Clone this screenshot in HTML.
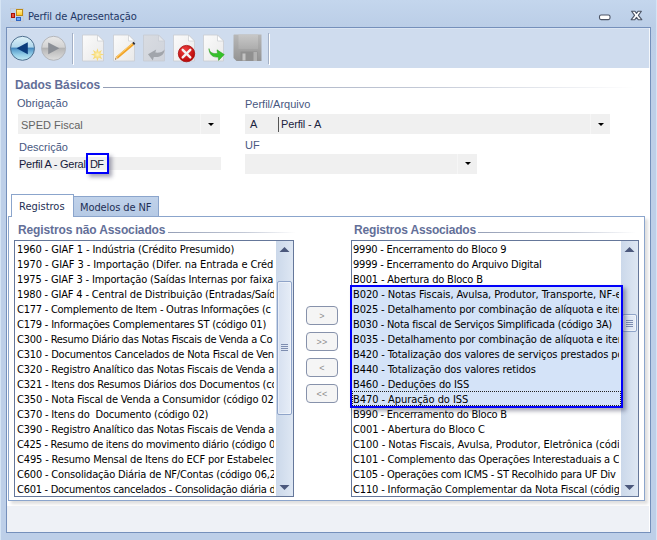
<!DOCTYPE html>
<html lang="pt-BR">
<head>
<meta charset="utf-8">
<title>Perfil de Apresentação</title>
<style>
html,body{margin:0;padding:0;}
body{width:657px;height:540px;overflow:hidden;position:relative;background:#c1d3eb;
  font-family:"DejaVu Sans Condensed","DejaVu Sans","Liberation Sans",sans-serif;font-size:11px;color:#000;}
.abs{position:absolute;}
#frame{left:0;top:0;width:657px;height:540px;background:linear-gradient(#c4d6ed 0px,#bbcee7 27px,#bdcfe8 60px,#bdcfe8 100%);}
#edgeL{left:0;top:0;width:1px;height:540px;background:#d5e4f4;}
#edgeR{left:656px;top:0;width:1px;height:540px;background:#d5e4f4;}
#title{left:28px;top:10px;height:14px;line-height:14px;color:#1e3766;white-space:nowrap;letter-spacing:-0.12px;}
#client{left:6px;top:27px;width:643px;height:504px;border:1px solid #7590bb;background:#fff;}
#toolbar{left:0;top:0;width:642px;height:40px;background:#cfdcee;border-right:1px solid #f4f7fb;box-shadow:inset 0 1px 0 #dbe5f3;}
.sep{width:1px;height:31px;top:5px;background:#a3b0c6;box-shadow:1px 1px 0 #fff;}
#status{left:0;top:478px;width:642px;height:26px;background:#eef1f6;}
.gtitle{font:bold 12px "Liberation Sans",sans-serif;color:#636f98;white-space:nowrap;line-height:14px;height:14px;}
.gline{height:1px;background:linear-gradient(90deg,#959fb6,#c3c9d6 60%,#fff);}
.lbl{font:11px "Liberation Sans",sans-serif;color:#48587f;white-space:nowrap;line-height:13px;height:13px;}
.field{background:#f0f0f0;height:20px;}
.ftxt{font:11px "Liberation Sans",sans-serif;white-space:nowrap;line-height:13px;height:13px;}
.dd{width:0;height:0;border-left:3.25px solid transparent;border-right:3.25px solid transparent;border-top:3.75px solid #000;}
.tab{box-sizing:border-box;border:1px solid #8ba5cc;border-bottom:none;white-space:nowrap;color:#1e2f55;}
#tabpage{left:1px;top:188px;width:635px;height:283px;border:1px solid #8ba5cc;background:#fff;box-shadow:3px 3px 3px rgba(0,0,0,.13);}
.list{box-sizing:border-box;border:1px solid #65779a;background:#fff;overflow:hidden;}
.list .it{position:relative;box-sizing:border-box;width:259px;height:15px;line-height:18px;white-space:nowrap;padding-left:2px;letter-spacing:-0.1px;overflow:hidden;}
.sb{width:17px;top:0;right:0;bottom:0;background:linear-gradient(90deg,#cbd8ea,#dee7f3);}
.thumb{box-sizing:border-box;border:1px solid #8fa4c9;border-radius:2px;background:linear-gradient(90deg,#d6e0f0,#e6edf7);box-shadow:inset 0 0 0 1px rgba(255,255,255,.45);}
.btn{box-sizing:border-box;width:32px;height:19px;border:1px solid #8792ab;border-radius:4px;background:#f5f5f5;color:#8e8e8e;text-align:center;line-height:19px;font:9px/19px "Liberation Sans",sans-serif;letter-spacing:0.3px;}
</style>
</head>
<body>
<div id="frame" class="abs"></div>
<div id="edgeL" class="abs"></div>
<div id="edgeR" class="abs"></div>

<!-- title icon -->
<svg class="abs" style="left:10px;top:8px" width="14" height="14" viewBox="0 0 14 14">
  <defs><linearGradient id="yl" x1="0" y1="0" x2="0" y2="1"><stop offset="0" stop-color="#fff2a8"/><stop offset="1" stop-color="#ffc61e"/></linearGradient></defs><rect x="0.5" y="0.5" width="13" height="13" fill="none" stroke="#c4c6cc" stroke-width="0.8" opacity=".8"/>
  <rect x="6.5" y="1.5" width="6" height="6" fill="url(#yl)" stroke="#bd8a14"/>
  <rect x="1.5" y="5.5" width="3" height="4" fill="#e8503c" stroke="#a81408"/>
  <rect x="6.5" y="9.5" width="4" height="3" fill="#6aa8f8" stroke="#2c64c4"/>
</svg>
<div id="title" class="abs">Perfil de Apresentação</div>

<!-- caption buttons -->
<svg class="abs" style="left:597px;top:8px" width="50" height="16" viewBox="0 0 50 16">
  <rect x="2.5" y="7" width="10.5" height="4.6" rx="1.6" fill="#fff" stroke="#4d5566" stroke-width="1.1"/>
  <path d="M34.6 3.3 L38 3.3 L39.5 5.4 L41 3.3 L44.4 3.3 L41.4 7.4 L44.8 11.7 L41.2 11.7 L39.5 9.4 L37.8 11.7 L34.2 11.7 L37.6 7.4 Z" fill="#fff" stroke="#4d5566" stroke-width="1.1" stroke-linejoin="round"/>
</svg>

<div id="client" class="abs">
  <div id="toolbar" class="abs"></div>
  <div id="status" class="abs"></div>

  <!-- toolbar icons : coordinates are relative to client inner origin (7,28) -->
  <svg class="abs" style="left:0;top:0" width="300" height="40" viewBox="7 28 300 40">
    <defs>
      <linearGradient id="gb" x1="0" y1="0" x2="0" y2="1">
        <stop offset="0" stop-color="#def1f8"/><stop offset=".44" stop-color="#b2d8ec"/>
        <stop offset=".5" stop-color="#4688bd"/><stop offset=".58" stop-color="#62a4d0"/><stop offset=".78" stop-color="#96cfe8"/><stop offset="1" stop-color="#c4eaf5"/>
      </linearGradient>
      <linearGradient id="gg" x1="0" y1="0" x2="0" y2="1">
        <stop offset="0" stop-color="#e9e9e9"/><stop offset=".45" stop-color="#d3d3d3"/>
        <stop offset=".5" stop-color="#b3b3b3"/><stop offset=".6" stop-color="#bebebe"/><stop offset="1" stop-color="#dfdfdf"/>
      </linearGradient>
      <linearGradient id="pg" x1="0" y1="0" x2="1" y2="1">
        <stop offset="0" stop-color="#fbfbfb"/><stop offset="1" stop-color="#e9e9e9"/>
      </linearGradient>
      <linearGradient id="pgd" x1="0" y1="0" x2="1" y2="1">
        <stop offset="0" stop-color="#d9dce2"/><stop offset="1" stop-color="#cfd3da"/>
      </linearGradient>
      <radialGradient id="rd" cx=".4" cy=".3" r=".8">
        <stop offset="0" stop-color="#f04040"/><stop offset="1" stop-color="#b00000"/>
      </radialGradient>
      <linearGradient id="fl" x1="0" y1="0" x2="0" y2="1">
        <stop offset="0" stop-color="#b8b8b8"/><stop offset="1" stop-color="#939393"/>
      </linearGradient>
      <linearGradient id="fl2" x1="0" y1="0" x2="0" y2="1"><stop offset="0" stop-color="#c8c8c8"/><stop offset="1" stop-color="#adadad"/></linearGradient>
      <radialGradient id="st" cx=".5" cy=".5" r=".5">
        <stop offset="0" stop-color="#fdf4c8"/><stop offset=".5" stop-color="#f8dc78"/><stop offset="1" stop-color="#f5d466"/>
      </radialGradient>
    </defs>
    <!-- back -->
    <circle cx="22.5" cy="48.3" r="12" fill="url(#gb)" stroke="#4f6f8f" stroke-width="1"/>
    <path d="M16.6 48.3 L27.8 42.2 L27.8 54.2 Z" fill="#0b3c7c"/>
    <!-- forward -->
    <circle cx="53.6" cy="48.3" r="12" fill="url(#gg)" stroke="#b4b7bc" stroke-width="1"/>
    <path d="M59.4 48.3 L48.2 42.4 L48.2 54.2 Z" fill="#8b8f96"/>
    <!-- new -->
    <g>
      <path d="M82.5 35 H97.5 L103.5 41 V61 H82.5 Z" fill="url(#pg)" stroke="#c9cbd0" stroke-width=".8"/>
      <path d="M97.5 35 V41 H103.5 Z" fill="#fff" stroke="#c9cbd0" stroke-width=".7"/>
      <path d="M97.4 48.3 L98.6 52 L101.9 50 L100.2 53.4 L104.2 54.4 L100.3 55.6 L102.2 59.2 L98.7 57.4 L97.4 61 L96.2 57.4 L92.8 59.3 L94.5 55.8 L90.8 54.6 L94.6 53.5 L92.9 50 L96.3 52 Z" fill="url(#st)"/>
    </g>
    <!-- edit -->
    <g>
      <path d="M113.5 35 H128.5 L134.5 41 V61 H113.5 Z" fill="url(#pg)" stroke="#c9cbd0" stroke-width=".8"/>
      <path d="M128.5 35 V41 H134.5 Z" fill="#fff" stroke="#c9cbd0" stroke-width=".7"/>
      <path d="M115 59.6 L116.2 56.6 L132.2 43 L134 45 L118 58.6 Z" fill="#f2a325"/>
      <path d="M116.8 56.9 L132.5 43.6" stroke="#fbd27a" stroke-width=".9" fill="none"/>
      <path d="M115 59.6 L116.2 56.6 L118 58.6 Z" fill="#e9c9a0"/>
      <path d="M115 59.6 L115.5 58.3 L116.3 59.2 Z" fill="#503a2a"/>
      <path d="M132.2 43 L133.6 41.8 L135.3 43.8 L134 45 Z" fill="#2a2a33"/>
    </g>
    <!-- undo disabled -->
    <g>
      <path d="M143.5 35 H158.5 L164.5 41 V61 H143.5 Z" fill="url(#pgd)" stroke="#c6cad2" stroke-width=".8"/>
      <path d="M158.5 35 V41 H164.5 Z" fill="#e4e6ea" stroke="#c6cad2" stroke-width=".7"/>
      <path d="M148 54.2 L156.2 49.6 L155.3 52.6 C159.5 53 162.6 52 164.5 49.4 C164.4 55 159.8 57.6 153.8 57 L152.8 60.6 Z" fill="#a1a5ab"/>
    </g>
    <!-- delete -->
    <g>
      <path d="M173.5 35 H188.5 L194.5 41 V61 H173.5 Z" fill="url(#pg)" stroke="#c9cbd0" stroke-width=".8"/>
      <path d="M188.5 35 V41 H194.5 Z" fill="#fff" stroke="#c9cbd0" stroke-width=".7"/>
      <circle cx="186.5" cy="53.6" r="8.2" fill="url(#rd)" stroke="#a40c0c" stroke-width=".8"/>
      <path d="M182.7 49.8 L190.3 57.4 M190.3 49.8 L182.7 57.4" stroke="#f4f4f4" stroke-width="2.4" stroke-linecap="round"/>
    </g>
    <!-- export -->
    <g>
      <path d="M203.5 35 H217.5 L223.5 41 V61 H203.5 Z" fill="url(#pg)" stroke="#c9cbd0" stroke-width=".8"/>
      <path d="M217.5 35 V41 H223.5 Z" fill="#fff" stroke="#c9cbd0" stroke-width=".7"/>
      <path d="M209 48.6 C209.5 52.5 213 54.2 217.5 53.4 L217 49.8 L224.3 54.6 L218.6 60.4 L218.2 57 C213 57.8 209 54.5 209 48.6 Z" fill="#35c22a" stroke="#2a9a20" stroke-width=".5"/>
    </g>
    <!-- save disabled -->
    <g>
      <path d="M234 34.5 H261.5 V61 H236.5 L233.5 58 V35 Z" fill="url(#fl)"/>
      <rect x="238.5" y="34.5" width="19.5" height="14.5" fill="url(#fl2)"/>
      <rect x="240.5" y="51.5" width="17" height="9.5" fill="#909090"/>
      <rect x="242.5" y="53.5" width="3" height="7" fill="#c4c4c4"/>
      <rect x="253.5" y="52" width="3.5" height="9" fill="#b2b2b2"/>
    </g>
  </svg>
  <div class="abs sep" style="left:65px"></div>
  <div class="abs sep" style="left:261px"></div>

  <!-- Dados Básicos -->
  <div class="abs gtitle" style="left:8px;top:50px;letter-spacing:-0.08px">Dados Básicos</div>
  <div class="abs gline" style="left:96px;top:59px;width:532px"></div>

  <div class="abs lbl" style="left:10px;top:69px">Obrigação</div>
  <div class="abs field" style="left:11px;top:86px;width:202px"></div><div class="abs" style="left:193px;top:86px;width:1px;height:20px;background:#f6f6f6"></div>
  <div class="abs ftxt" style="left:14px;top:91px;color:#636363">SPED Fiscal</div>
  <div class="abs dd" style="left:201.25px;top:95px"></div>

  <div class="abs lbl" style="left:238px;top:70px">Perfil/Arquivo</div>
  <div class="abs field" style="left:238px;top:86px;width:365px"></div><div class="abs" style="left:583px;top:86px;width:1px;height:20px;background:#f6f6f6"></div>
  <div class="abs ftxt" style="left:243px;top:90px;color:#1c2440">A</div>
  <div class="abs" style="left:271px;top:89px;width:1px;height:15px;background:#555"></div>
  <div class="abs ftxt" style="left:274px;top:90px;color:#1c2440;letter-spacing:-0.15px">Perfil - A</div>
  <div class="abs dd" style="left:591px;top:95px"></div>

  <div class="abs lbl" style="left:12px;top:113px">Descrição</div>
  <div class="abs field" style="left:12px;top:129px;width:202px;height:13px"></div>
  <div class="abs ftxt" style="left:12px;top:130px;color:#15193a;letter-spacing:-0.27px">Perfil A - Geral</div><div class="abs ftxt" style="left:83px;top:130px;color:#15193a;letter-spacing:-0.6px">DF</div>

  <div class="abs lbl" style="left:238px;top:111px">UF</div>
  <div class="abs field" style="left:238px;top:126px;width:232px"></div><div class="abs" style="left:450px;top:126px;width:1px;height:20px;background:#f6f6f6"></div>
  <div class="abs dd" style="left:458px;top:134px"></div>

  <!-- DF highlight -->
  <div class="abs" style="left:79px;top:125px;width:19px;height:17px;border:2px solid #0000fa;box-shadow:3px 3px 4px rgba(60,60,90,.45)"></div>

  <!-- tabs -->
  <div id="tabpage" class="abs"></div>
  <div class="abs tab" style="left:66px;top:168px;width:86px;height:20px;background:linear-gradient(#c0d2ea,#b6cae5);line-height:21px;padding-left:6px;letter-spacing:-0.1px">Modelos de NF</div>
  <div class="abs tab" style="left:4px;top:166px;width:63px;height:23px;background:#fff;line-height:24px;padding-left:7px;letter-spacing:0px">Registros</div>

  <div class="abs gtitle" style="left:11px;top:195px;letter-spacing:-0.12px">Registros não Associados</div>
  <div class="abs gline" style="left:161px;top:204px;width:128px"></div>
  <div class="abs gtitle" style="left:347px;top:195px;letter-spacing:-0.18px">Registros Associados</div>
  <div class="abs gline" style="left:471px;top:204px;width:158px"></div>

  <!-- left list -->
  <div class="abs list" style="left:7px;top:212px;width:280px;height:257px">
    <div class="it" style="letter-spacing:-0.12px;">1960 - GIAF 1 - Indústria (Crédito Presumido)</div>
    <div class="it" style="letter-spacing:-0.07px;">1970 - GIAF 3 - Importação (Difer. na Entrada e Créd</div>
    <div class="it" style="letter-spacing:-0.146px;">1975 - GIAF 3 - Importação (Saídas Internas por faixa</div>
    <div class="it" style="letter-spacing:-0.157px;">1980 - GIAF 4 - Central de Distribuição (Entradas/Saíd</div>
    <div class="it" style="letter-spacing:-0.25px;">C177 - Complemento de Item - Outras Informações (c</div>
    <div class="it" style="letter-spacing:-0.218px;">C179 - Informações Complementares ST (código 01)</div>
    <div class="it" style="letter-spacing:-0.284px;">C300 - Resumo Diário das Notas Fiscais de Venda a Co</div>
    <div class="it" style="letter-spacing:-0.214px;">C310 - Documentos Cancelados de Nota Fiscal de Ven</div>
    <div class="it" style="letter-spacing:-0.203px;">C320 - Registro Analítico das Notas Fiscais de Venda a</div>
    <div class="it" style="letter-spacing:-0.206px;">C321 - Itens dos Resumos Diários dos Documentos (có</div>
    <div class="it" style="letter-spacing:-0.185px;">C350 - Nota Fiscal de Venda a Consumidor (código 02)</div>
    <div class="it" style="letter-spacing:-0.193px;">C370 - Itens do&nbsp; Documento (código 02)</div>
    <div class="it" style="letter-spacing:-0.203px;">C390 - Registro Analítico das Notas Fiscais de Venda a</div>
    <div class="it" style="letter-spacing:-0.297px;">C425 - Resumo de itens do movimento diário (código 0</div>
    <div class="it" style="letter-spacing:-0.16px;">C495 - Resumo Mensal de Itens do ECF por Estabelec</div>
    <div class="it" style="letter-spacing:-0.183px;">C600 - Consolidação Diária de NF/Contas (código 06,2</div>
    <div class="it" style="letter-spacing:-0.284px;">C601 - Documentos cancelados - Consolidação diária d</div>
    <div class="abs sb">
      <svg class="abs" style="left:0;top:0" width="17" height="255" viewBox="0 0 17 255">
        <path d="M3.5 11 L8.5 6 L13.5 11 Z" fill="#4b587c"/>
        <path d="M3.5 244 L8.5 249 L13.5 244 Z" fill="#4b587c"/>
      </svg>
      <div class="abs thumb" style="left:1px;top:40px;width:15px;height:134px"></div>
      <div class="abs" style="left:5px;top:103px;width:7px;height:1px;background:#7d8db0;box-shadow:0 2px 0 #7d8db0,0 4px 0 #7d8db0,0 6px 0 #7d8db0"></div>
    </div>
  </div>

  <!-- buttons -->
  <div class="abs btn" style="left:299px;top:278px">&gt;</div>
  <div class="abs btn" style="left:299px;top:304px">&gt;&gt;</div>
  <div class="abs btn" style="left:299px;top:330px">&lt;</div>
  <div class="abs btn" style="left:299px;top:356px">&lt;&lt;</div>

  <!-- right list -->
  <div class="abs list rl" style="left:344px;top:212px;width:288px;height:257px">
    <div class="abs" style="left:0;top:45px;width:269px;height:120px;background:#d4e3f8"></div>
    <div class="abs" style="left:0;top:150px;width:269px;height:15px;box-sizing:border-box;border:1px dotted #222"></div>
    <div class="it" style="letter-spacing:-0.231px;">9990 - Encerramento do Bloco 9</div>
    <div class="it" style="letter-spacing:-0.215px;">9999 - Encerramento do Arquivo Digital</div>
    <div class="it" style="letter-spacing:-0.187px;">B001 - Abertura do Bloco B</div>
    <div class="it sel" style="letter-spacing:-0.101px;">B020 - Notas Fiscais, Avulsa, Produtor, Transporte, NF-e</div>
    <div class="it sel" style="letter-spacing:-0.155px;">B025 - Detalhamento por combinação de alíquota e item</div>
    <div class="it sel" style="letter-spacing:-0.233px;">B030 - Nota fiscal de Serviços Simplificada (código 3A)</div>
    <div class="it sel" style="letter-spacing:-0.155px;">B035 - Detalhamento por combinação de alíquota e item</div>
    <div class="it sel" style="letter-spacing:-0.105px;">B420 - Totalização dos valores de serviços prestados po</div>
    <div class="it sel" style="letter-spacing:-0.104px;">B440 - Totalização dos valores retidos</div>
    <div class="it sel" style="letter-spacing:-0.112px;">B460 - Deduções do ISS</div>
    <div class="it sel" style="letter-spacing:-0.065px;">B470 - Apuração do ISS</div>
    <div class="it" style="letter-spacing:-0.244px;">B990 - Encerramento do Bloco B</div>
    <div class="it" style="letter-spacing:-0.12px;">C001 - Abertura do Bloco C</div>
    <div class="it" style="letter-spacing:-0.056px;">C100 - Notas Fiscais, Avulsa, Produtor, Eletrônica (códi</div>
    <div class="it" style="letter-spacing:-0.167px;">C101 - Complemento das Operações Interestaduais a C</div>
    <div class="it" style="letter-spacing:-0.241px;">C105 - Operações com ICMS - ST Recolhido para UF Div</div>
    <div class="it" style="letter-spacing:-0.147px;">C110 - Informação Complementar da Nota Fiscal (códig</div>
    <div class="abs sb">
      <svg class="abs" style="left:0;top:0" width="17" height="255" viewBox="0 0 17 255">
        <path d="M3.5 11 L8.5 6 L13.5 11 Z" fill="#4b587c"/>
        <path d="M3.5 244 L8.5 249 L13.5 244 Z" fill="#4b587c"/>
      </svg>
      <div class="abs thumb" style="left:1px;top:73px;width:15px;height:18px"></div>
      <div class="abs" style="left:5px;top:79px;width:7px;height:1px;background:#7d8db0;box-shadow:0 2px 0 #7d8db0,0 4px 0 #7d8db0,0 6px 0 #7d8db0"></div>
    </div>
  </div>
  <!-- selection highlight rectangle -->
  <div class="abs" style="left:343px;top:257px;width:269px;height:119px;border:2px solid #0000fa;box-shadow:3px 3px 4px rgba(60,60,90,.45)"></div>
</div>
<style>.rl .it{padding-left:1px;width:267px;}</style>
</body>
</html>
